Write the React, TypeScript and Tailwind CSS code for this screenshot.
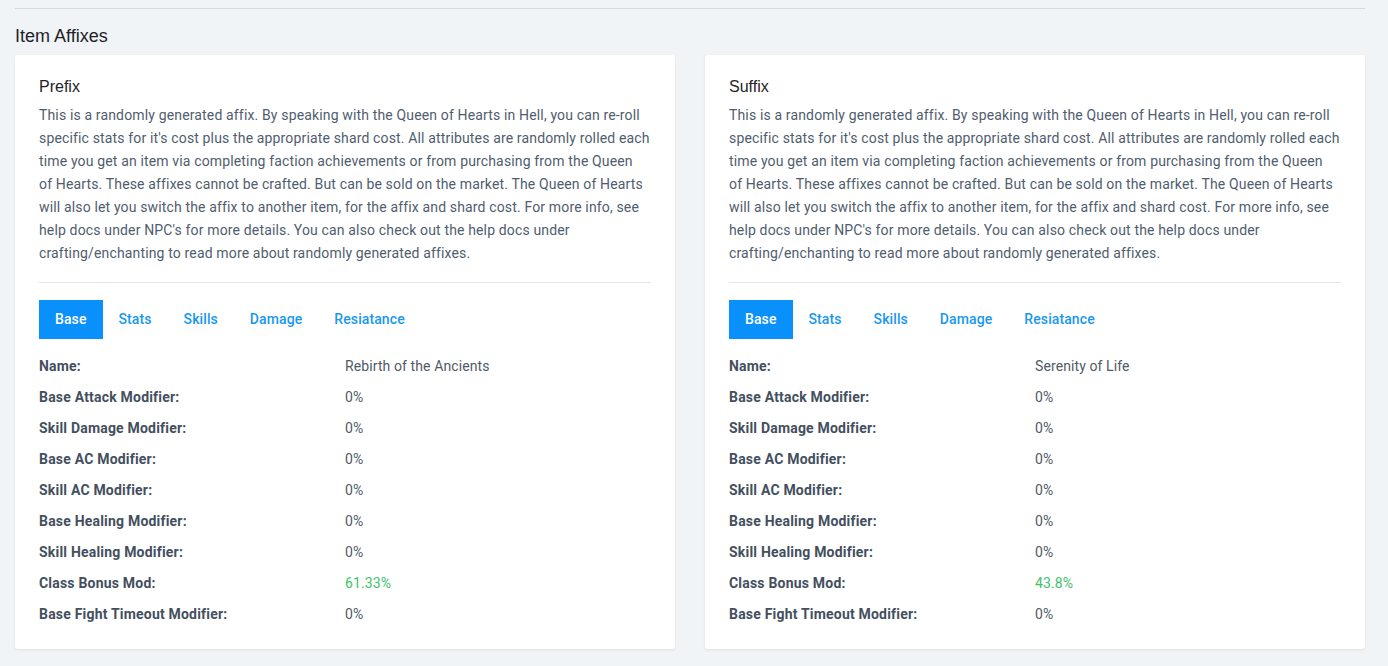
const BLURB_START =
  "This is a randomly generated affix. By speaking with the Queen of Hearts in Hell, you can re-roll specific stats for it's cost plus the appropriate shard cost. All attributes are randomly rolled each time you get an item via completing faction achievements or from purchasing from the Queen";
const BLURB_END =
  "of Hearts. These affixes cannot be crafted. But can be sold on the market. The Queen of Hearts will also let you switch the affix to another item, for the affix and shard cost. For more info, see help docs under NPC's for more details. You can also check out the help docs under crafting/enchanting to read more about randomly generated affixes.";

const TABS = ["Base", "Stats", "Skills", "Damage", "Resiatance"];

interface AffixCardProps {
  title: string;
  name: string;
  classBonus: string;
}

function AffixCard({ title, name, classBonus }: AffixCardProps) {
  const rows: { label: string; value: string; green?: boolean }[] = [
    { label: "Name:", value: name },
    { label: "Base Attack Modifier:", value: "0%" },
    { label: "Skill Damage Modifier:", value: "0%" },
    { label: "Base AC Modifier:", value: "0%" },
    { label: "Skill AC Modifier:", value: "0%" },
    { label: "Base Healing Modifier:", value: "0%" },
    { label: "Skill Healing Modifier:", value: "0%" },
    { label: "Class Bonus Mod:", value: classBonus, green: true },
    { label: "Base Fight Timeout Modifier:", value: "0%" },
  ];

  return (
    <div className="rounded-[3px] bg-white px-6 pb-[19px] pt-5 shadow-[0_1px_3px_rgba(0,0,0,0.08)]">
      <h3 className="font-['Liberation_Sans',Arial,sans-serif] text-[16px] leading-6 text-[#1f2328]">{title}</h3>
      <p className="mt-[5px] text-[14px] leading-[23px] tracking-[0.15px] text-[#4f5d6e]">
        {BLURB_START}
        <br />
        {BLURB_END}
      </p>
      <hr className="my-[17px] border-t border-[#e2e6ea]" />
      <div className="flex">
        {TABS.map((tab, i) => (
          <button
            key={tab}
            type="button"
            className={`px-4 py-[10px] text-[14px] font-medium leading-[19px] tracking-[0.1px] ${
              i === 0 ? "bg-[#0a90fb] text-white" : "text-[#1a97f0]"
            }`}
          >
            {tab}
          </button>
        ))}
      </div>
      <div className="mt-3">
        {rows.map((row) => (
          <div key={row.label} className="grid grid-cols-2 py-[5px] text-[14px] leading-[21px]">
            <span className="font-bold tracking-[0.2px] text-[#434f5e]">{row.label}</span>
            <span className={`tracking-[0.1px] ${row.green ? "text-[#3cc36a]" : "text-[#4f5a66]"}`}>{row.value}</span>
          </div>
        ))}
      </div>
    </div>
  );
}

export default function App() {
  return (
    <div className="min-h-[666px] bg-[#f0f4f7] pl-[15px] pr-[23px] pt-2 font-['Roboto',sans-serif]">
      <hr className="border-t border-[#d5dadf]" />
      <h2 className="mt-[15px] font-['Liberation_Sans',Arial,sans-serif] text-[18px] leading-6 text-[#1f2328]">
        Item Affixes
      </h2>
      <div className="mt-[7px] grid grid-cols-2 gap-[30px]">
        <AffixCard title="Prefix" name="Rebirth of the Ancients" classBonus="61.33%" />
        <AffixCard title="Suffix" name="Serenity of Life" classBonus="43.8%" />
      </div>
    </div>
  );
}
